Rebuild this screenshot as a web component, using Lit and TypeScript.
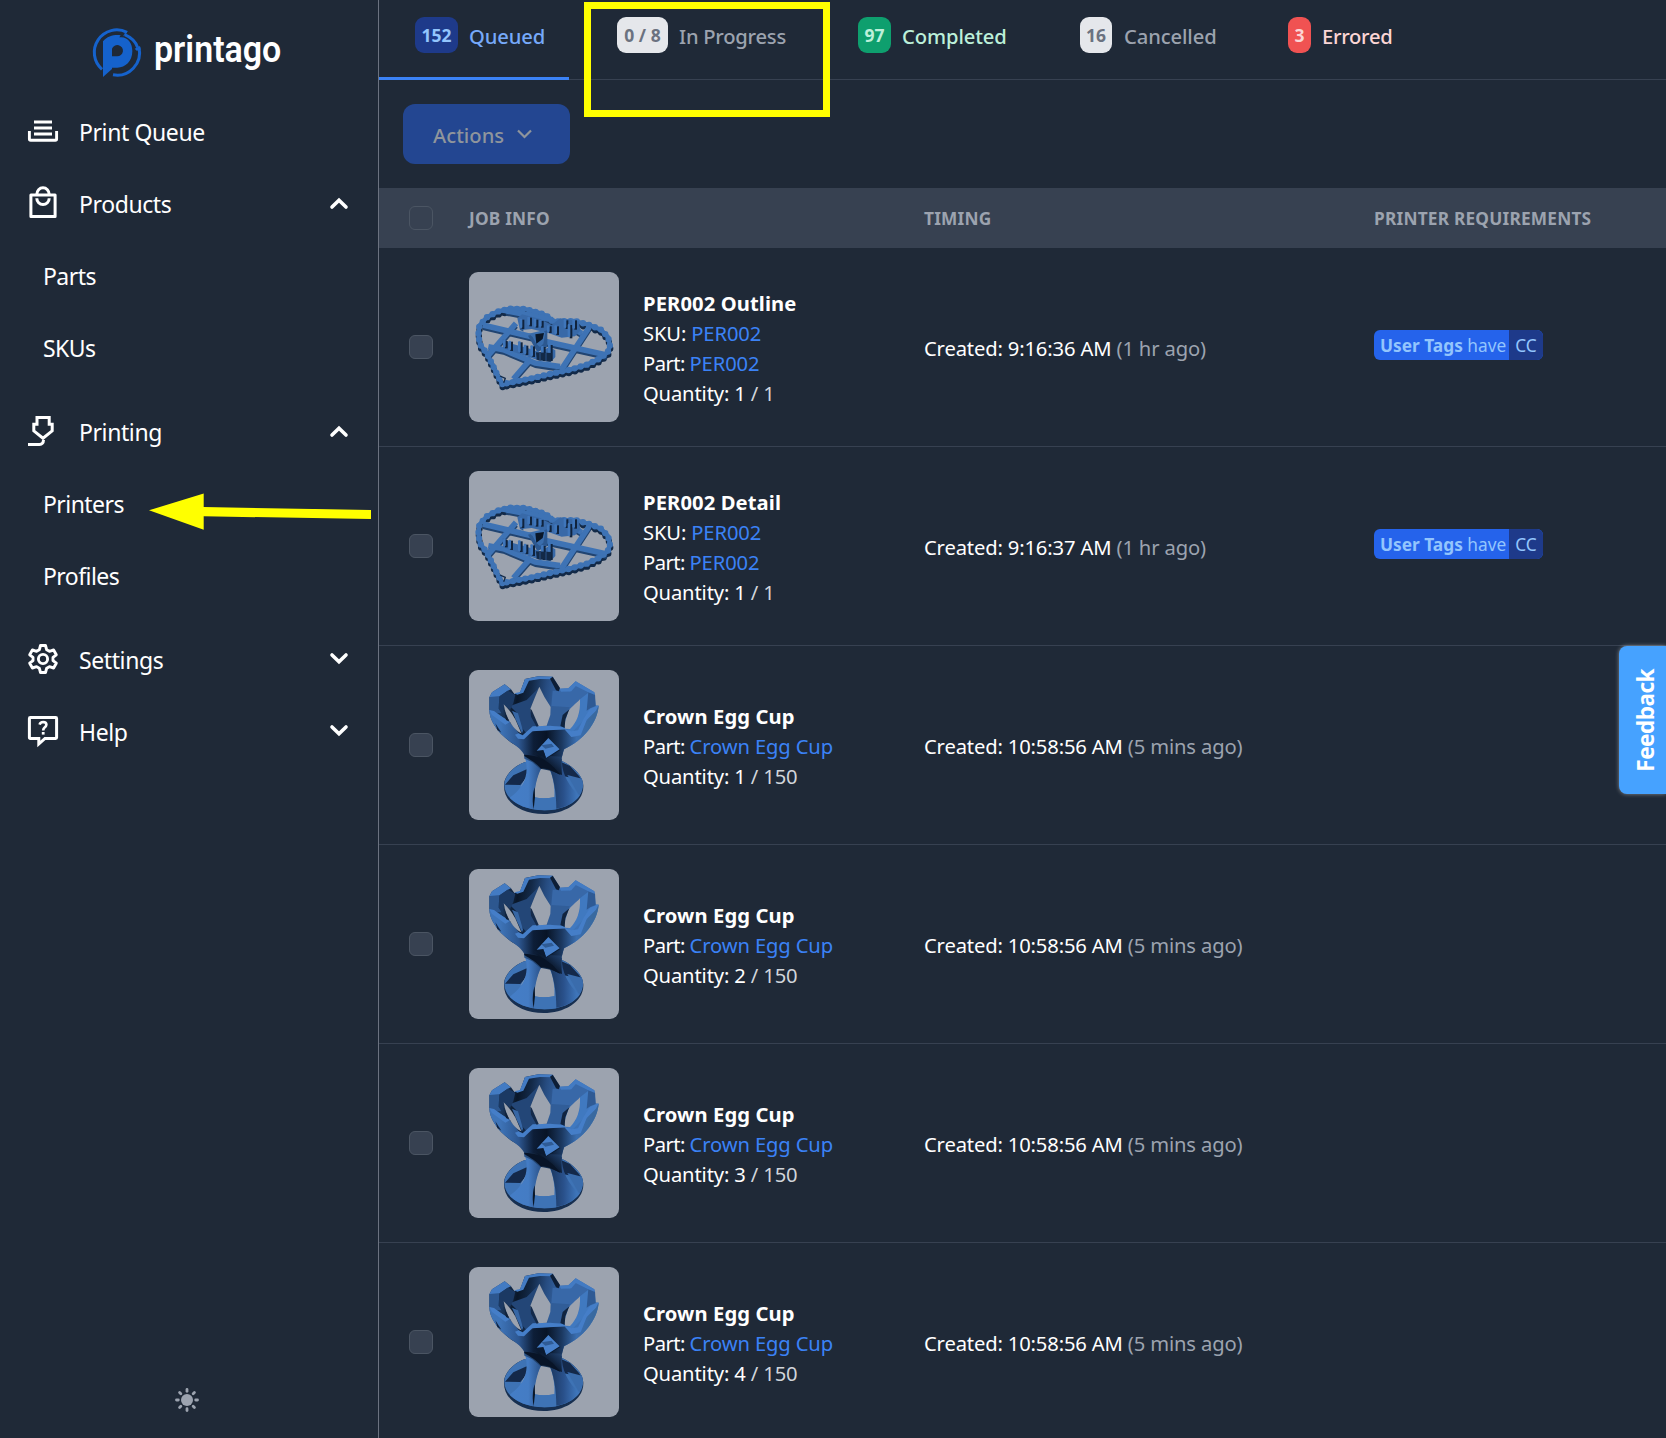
import { LitElement, html, svg, css, nothing, TemplateResult } from "lit";
import { customElement, property } from "lit/decorators.js";
import { classMap } from "lit/directives/class-map.js";

const chevronUp = html`<svg class="chev" width="20" height="14" viewBox="0 0 20 14"><path d="M3 11 10 4.2 17 11" fill="none" stroke="#fff" stroke-width="3.6" stroke-linecap="round"/></svg>`;
const chevronDown = html`<svg class="chev" width="20" height="14" viewBox="0 0 20 14"><path d="M3 3 10 9.8 17 3" fill="none" stroke="#fff" stroke-width="3.6" stroke-linecap="round"/></svg>`;

const icons: Record<string, TemplateResult> = {
  queue: svg`<path d="M6 2H24M6 8H24M6 14H24" stroke-width="3"/><path d="M1.4 11V19Q1.4 20.300 2.700 20.300H27.300Q28.600 20.300 28.600 19V11" stroke-width="2.9"/>`,
  bag: svg`<path d="M2.900 9.100H27.100V30.500H2.900Z" stroke-width="3" stroke-linejoin="round"/><path d="M8.800 8.500A6.200 6.700 0 0 1 21.200 8.500" stroke-width="3"/><path d="M8.800 12.200A6.200 6.400 0 0 0 21.200 12.200" stroke-width="3"/>`,
  nozzle: svg`<path d="M9 1.400H21.200V8.300H24.200V14.800L15 22.200 5.800 14.800V8.300H9Z" stroke-width="3"/><path d="M0 28.400H11.500Q15.300 28.400 15.500 24" stroke-width="3"/>`,
  gear: svg`<path d="M12.500 1.500H17.500L18.700 5.800 21.400 7.300 25.600 6 28.300 10.800 25 13.400V16.600L28.300 19.200 25.600 24 21.400 22.700 18.700 24.200 17.500 28.500H12.500L11.300 24.200 8.600 22.700 4.400 24 1.700 19.200 5 16.600V13.400L1.700 10.800 4.400 6 8.600 7.300 11.300 5.800Z" stroke-width="2.900" stroke-linejoin="round"/><circle cx="15" cy="15" r="4.600" stroke-width="2.900"/>`,
  help: svg`<path d="M2.300 1.500H27.700Q28.600 1.500 28.600 2.400V21.600Q28.600 22.500 27.700 22.500H17L10.800 28V22.500H2.300Q1.400 22.500 1.400 21.600V2.400Q1.400 1.500 2.300 1.500Z" stroke-width="3"/><path d="M11.600 8.600Q12.200 6 15.200 6 18.400 6.100 18.400 8.700 18.300 10.300 16.600 11.500 15.200 12.600 15.200 14.600" stroke-width="2.600"/><path d="M15.200 16V18.600" stroke-width="2.800"/>`,
};

@customElement("nav-item")
class NavItem extends LitElement {
  @property() icon = "";
  @property() label = "";
  @property() toggle = "";
  static styles = css`
    :host { display: block; }
    .row { display: flex; align-items: center; height: 72px; padding: 0 29px 0 28px; box-sizing: border-box; }
    .sub { padding-left: 43px; }
    .icon { display: flex; width: 30px; margin-right: 21px; padding-bottom: 2px; }
    .bag { padding-bottom: 4px; }
    .icon svg { overflow: visible; }
    .text { flex: 1; letter-spacing: -0.4px; line-height: 36px; }
    .sub .text { letter-spacing: -0.55px; }
    .chev { padding-bottom: 2px; }
  `;
  render() {
    const h = this.icon === "bag" ? 32 : this.icon === "queue" ? 22 : 30;
    return html`<div class=${classMap({ row: true, sub: !this.icon })}>
      ${this.icon
        ? html`<span class=${classMap({ icon: true, bag: this.icon === "bag" })}><svg width="30" height=${h} viewBox="0 0 30 ${h}" fill="none" stroke="#fff">${icons[this.icon]}</svg></span>`
        : nothing}
      <span class="text">${this.label}</span>
      ${this.toggle === "up" ? chevronUp : this.toggle === "down" ? chevronDown : nothing}
    </div>`;
  }
}

@customElement("heart-model")
class HeartModel extends LitElement {
  static styles = css`:host { display: block; } svg { display: block; }`;
  render() {
    const ring = "M127 357 112 330 98 300 80 265 60 238 55 210 58 182 80 157 112 140 150 131 195 132 240 144 262 154 279 170 300 169 345 168 388 180 423 194 444 216 450 240 443 262 416 282 378 300 330 314 270 327 210 341 165 350Z";
    const struts = "M68 180 215 215M250 228 440 270M85 245 130 254 225 294 300 305M168 175 82 274M388 186 304 314M214 280 160 342M137 137 278 164M340 190 365 205";
    const pegs: [number, number, number][] = [
      [186, 164, 28], [209, 158, 26], [228, 164, 24], [244, 168, 20], [268, 184, 20], [290, 184, 26], [318, 166, 26], [330, 180, 40], [344, 166, 28],
      [136, 228, 22], [152, 230, 28], [181, 232, 32], [198, 242, 28], [218, 244, 32], [236, 262, 24], [250, 246, 42], [271, 240, 48],
    ];
    return html`<svg width="150" height="150" viewBox="27 21 450 450" fill="none" stroke-linejoin="round">
      <g transform="translate(1 9)" stroke="#132a48"><path d=${ring} stroke-width="12"/><path d=${ring} stroke-width="19" stroke-linecap="round" stroke-dasharray="0 19"/><path d=${struts} stroke="#214471" stroke-width="12"/></g>
      <g stroke="#3e73b5"><path d=${ring} stroke-width="13"/><path d=${ring} stroke-width="19" stroke-linecap="round" stroke-dasharray="0 19"/><path d=${struts} stroke-width="17"/></g>
      <path d="M172 160 186 148 240 162 275 180 300 160 355 168 362 196 345 214 305 218 265 204 215 192 180 196ZM128 222 150 235 200 248 240 262 268 245 286 256 286 276 272 292 230 284 170 264 130 250Z" fill="#3869a8"/>
      <path d="M180 170 190 172 190 200 180 194ZM204 212 262 196 262 246 232 262Z" fill="#2c5890"/>
      ${pegs.map(([x, y, h]) => svg`<rect x=${x - 1} y=${y} width="8" height=${h} fill="#10233d"/><rect x=${x - 7} y=${y - 3} width="8" height=${h} rx="3" fill="#3f76bb"/>`)}
      <path d="M206 206 250 196 256 204 250 236 240 246 228 236 218 216Z" fill="#3a6dac"/>
      <path d="M226 208 252 204 248 222 229 236Z" fill="#0a1728"/>
      <path d="M228 262 276 264 272 290 230 284Z" fill="#132a48"/><path d="M240 262V286M258 264V288" stroke="#25497a" stroke-width="4"/>
      <path d="M120 333 136 340 131 353" stroke="#132a48" stroke-width="4"/>
    </svg>`;
  }
}

@customElement("cup-model")
class CupModel extends LitElement {
  static styles = css`:host { display: block; } svg { display: block; }`;
  render() {
    return html`<svg width="150" height="150" viewBox="27 30 450 450">
      <defs>
        <linearGradient id="inner" x1="115" y1="130" x2="330" y2="160" gradientUnits="userSpaceOnUse"><stop offset="0" stop-color="#21436f"/><stop offset=".25" stop-color="#0a1729"/><stop offset=".42" stop-color="#132947"/><stop offset=".62" stop-color="#264b7f"/><stop offset=".85" stop-color="#3869aa"/><stop offset="1" stop-color="#3d72b5"/></linearGradient>
        <linearGradient id="front" x1="120" y1="190" x2="400" y2="190" gradientUnits="userSpaceOnUse"><stop offset="0" stop-color="#3e74b8"/><stop offset=".2" stop-color="#2d5791"/><stop offset=".36" stop-color="#0d1e38"/><stop offset=".5" stop-color="#081426"/><stop offset=".66" stop-color="#1b3860"/><stop offset=".82" stop-color="#3a6eb0"/><stop offset="1" stop-color="#39699f"/></linearGradient>
        <linearGradient id="legL" x1="160" y1="0" x2="250" y2="0" gradientUnits="userSpaceOnUse"><stop offset="0" stop-color="#447dc6"/><stop offset=".5" stop-color="#447cc4"/><stop offset="1" stop-color="#264a7e"/></linearGradient>
        <linearGradient id="legR" x1="270" y1="0" x2="350" y2="0" gradientUnits="userSpaceOnUse"><stop offset="0" stop-color="#1b3860"/><stop offset=".5" stop-color="#29508a"/><stop offset="1" stop-color="#3e75ba"/></linearGradient>
        <linearGradient id="waist" x1="215" y1="330" x2="290" y2="250" gradientUnits="userSpaceOnUse"><stop offset="0" stop-color="#3a6dae"/><stop offset=".4" stop-color="#0a172a"/><stop offset=".6" stop-color="#152c4d"/><stop offset="1" stop-color="#2b5389"/></linearGradient>
      </defs>
      <path d="M132 378C130 350 160 318 195 306L306 303C340 318 371 350 370 378 371 430 310 462 251 462 185 462 132 430 132 378Z" fill="#172f50"/>
      <path d="M133 374C132 350 160 318 195 306L306 303C340 318 370 350 369 374 369 421 315 451 251 451 190 451 133 421 133 374Z" fill="#3e73b5"/>
      <path d="M135 374 160 346 200 328 206 345 181 375ZM303 306 330 318 357 348 363 358 306 348Z" fill="#14294a"/>
      <path d="M322 345 366 356 369 378 358 408Z" fill="#3a6cac"/>
      <path d="M181 382 203 343 203 360ZM305 348 324 376 309 366Z" fill="#9ca3af"/>
      <path d="M243 327H268C279 350 285 380 283 412Q252 418 223 412C223 380 229 350 243 327Z" fill="#9ca3af"/>
      <path d="M223 412Q252 418 284 411L289 448Q252 453 222 448Z" fill="#3e73b5"/>
      <path d="M193 285 245 322C230 350 219 400 222 447 192 443 165 430 149 413 195 380 210 340 193 285Z" fill="url(#legL)"/>
      <path d="M221 447C215 420 220 392 224 382L225 412Z" fill="#0a1728"/>
      <path d="M262 310 306 296C303 335 325 380 359 407 340 430 315 442 289 446 289 400 282 350 262 310Z" fill="url(#legR)"/>
      <path d="M190 262H316C305 280 303 300 306 345L272 332 240 326 216 306 193 296Z" fill="url(#waist)"/>
      <path d="M88 112 96 97 134 73 153 88 163 102 180 98 195 57 235 49 278 50 300 86 325 85 347 64 403 97 407 136 416 137C412 190 370 240 312 268L193 276C180 262 160 252 150 245 110 215 88 180 88 150Z" fill="url(#inner)"/>
      <path d="M200 120 238 82 212 144 214 165 228 200 200 220 172 190 170 158 150 138Z" fill="#234677"/>
      <path d="M278 92 330 96 350 76 385 96 380 140 362 118 322 157 306 200 268 198 274 138Z" fill="#3868a8"/>
      <path d="M274 138 330 142 310 168 300 198H262Z" fill="#315d98"/>
      <path d="M360 118 385 98 392 142 376 176 352 200 332 222 322 208 345 190 358 160Z" fill="#4079c0"/>
      <path d="M385 96 405 102 407 138 392 144 380 152Z" fill="#2f5a94"/>
      <path d="M163 100 180 96 195 57 235 49 278 50 282 58 240 57 207 62 190 98 172 104ZM88 112 96 97 134 73 153 88 143 92 118 110ZM325 85 347 64 403 97 405 105 385 97 347 78 334 94 303 95 298 86Z" fill="#437bc3"/>
      <path d="M278 50 300 84 296 94 288 91 270 56Z" fill="#0d1e36"/>
      <path d="M88 111 118 109 116 146 124 160 104 158 88 151Z" fill="#2d578f"/>
      <path d="M118 109 143 92 166 104 160 130 150 150 131 133 128 160 116 146Z" fill="#1b3963"/>
      <path d="M88 150 125 170 150 184 180 224 190 236 222 212 316 208 334 230 354 228 380 180 416 137C412 190 370 240 312 268L306 290 193 284C180 262 160 252 150 245 110 215 88 180 88 150Z" fill="url(#front)"/>
      <path d="M88 150 102 153 140 180 148 180 150 186 136 194 96 165ZM165 224 176 220 188 226 218 199 270 197 316 202 318 208 217 214 192 238 174 236ZM312 206 334 214 354 211 370 178 390 146 416 136 408 152 380 180 362 226 334 231Z" fill="#457ec8"/>
      <path d="M131 133C148 148 160 168 166 178L184 220C165 212 138 180 131 133Z" fill="#9ca3af"/>
      <path d="M156 152 174 160 189 212 186 220 166 176Z" fill="#3767a5"/>
      <path d="M131 133C133 160 142 178 158 198L150 186 138 180Z" fill="#0e2039"/>
      <path d="M238 80Q252 112 272 141L271 165 260 197 232 199 214 165 211 146Q226 108 238 80Z" fill="#9ca3af"/>
      <path d="M211 146 215 150 236 198 230 200 213 170Z" fill="#142a4a"/>
      <path d="M360 118C362 160 350 188 330 207L316 206 312 195 324 157C330 142 348 132 360 118Z" fill="#9ca3af"/>
      <path d="M301 198 308 165 328 148 316 178 314 204Z" fill="#11243f"/>
      <path d="M193 284C240 285 270 305 302 345 280 334 262 322 243 326 228 308 212 300 193 288Z" fill="#081427"/>
      <path d="M106 190 124 218 112 210Z" fill="#10233f"/>
      <path d="M265 234 301 270 258 296 224 273Z" fill="#0b1a30"/>
      <path d="M265 234 299 268 258 294 250 270 230 272Z" fill="#4780ca"/>
      <path d="M244 256 275 251 282 260 256 266Z" fill="#2f5b95"/><path d="M250 270 258 294 252 290Z" fill="#0b1a30"/>
    </svg>`;
  }
}

interface Job { title: string; sku?: string; part: string; n: number; of: number; time: string; ago: string; tag?: string; model: "heart" | "cup"; }
const jobs: Job[] = [
  { title: "PER002 Outline", sku: "PER002", part: "PER002", n: 1, of: 1, time: "9:16:36 AM", ago: "1 hr ago", tag: "CC", model: "heart" },
  { title: "PER002 Detail", sku: "PER002", part: "PER002", n: 1, of: 1, time: "9:16:37 AM", ago: "1 hr ago", tag: "CC", model: "heart" },
  ...[1, 2, 3, 4].map((n): Job => ({ title: "Crown Egg Cup", part: "Crown Egg Cup", n, of: 150, time: "10:58:56 AM", ago: "5 mins ago", model: "cup" })),
];

const tabs = [
  { key: "queued", count: "152", label: "Queued" },
  { key: "progress", count: "0 / 8", label: "In Progress" },
  { key: "completed", count: "97", label: "Completed" },
  { key: "cancelled", count: "16", label: "Cancelled" },
  { key: "errored", count: "3", label: "Errored" },
];

@customElement("app-root")
class AppRoot extends LitElement {
  static styles = css`
    :host { display: block; position: relative; width: 1666px; height: 1438px; overflow: hidden; background: #1f2937; color: #fff; font-family: "Noto Sans", "Open Sans", sans-serif; font-size: 20.2px; line-height: 30px; }
    .app { display: flex; height: 100%; }
    .side { display: flex; flex-direction: column; width: 378px; flex: none; border-right: 1px solid #6b7280; font-size: 23px; }
    .brand { display: block; height: 96px; }
    .group { padding-bottom: 12px; }
    .theme { margin-top: auto; display: flex; justify-content: center; padding: 0 4px 26px 0; }
    .main { flex: 1; min-width: 0; display: flex; flex-direction: column; }
    .tabs { display: flex; gap: 12px; height: 80px; box-sizing: border-box; box-shadow: inset 0 -1px #374151; flex: none; }
    .tab { display: flex; flex: none; box-sizing: border-box; height: 80px; padding: 17px 0 0 36px; font-weight: 500; color: #9ca3af; white-space: nowrap; }
    .badge { flex: none; box-sizing: border-box; height: 36px; border-radius: 9px; text-align: center; font-size: 17.5px; font-weight: 700; line-height: 36px; background: #e5e7eb; color: #6b7280; }
    .label { margin-left: 11px; line-height: 36px; padding-top: 1px; letter-spacing: -.1px; }
    .queued { width: 190px; border-bottom: 3px solid #3b82f6; color: #76a9fa; }
    .queued .badge { width: 43px; background: #1e3a8a; color: #93c5fd; }
    .progress { width: 229px; }
    .progress .badge { width: 51px; }
    .progress .label { letter-spacing: -0.25px; }
    .completed { width: 210px; color: #bcf0da; }
    .completed .badge { width: 33px; background: #0e9f6e; color: #bcf0da; }
    .cancelled { width: 196px; }
    .cancelled .badge { width: 32px; }
    .cancelled .label { margin-left: 12px; }
    .errored { color: #fbd5d5; }
    .errored .badge { width: 23px; background: #f05252; color: #fbd5d5; }
    .errored .label { letter-spacing: -.3px; }
    .toolbar { display: flex; padding: 24px; flex: none; }
    .actions { display: flex; align-items: center; gap: 13px; box-sizing: border-box; width: 167px; height: 60px; padding: 2px 0 0 30px; border: 0; border-radius: 12px; background: #234691; color: #8f959c; font: inherit; font-weight: 500; }
    .actions svg { margin-bottom: 2px; }
    .row { display: grid; grid-template-columns: 90px 455px 450px 1fr; align-items: center; flex: none; box-sizing: border-box; }
    .head { height: 60px; background: #374151; color: #9ca3af; font-size: 17.3px; font-weight: 700; letter-spacing: .2px; }
    .col { padding-top: 2px; }
    .job { height: 199px; border-bottom: 1px solid #374151; }
    .check { box-sizing: border-box; width: 24px; height: 24px; margin-left: 30px; border: 1px solid #4b5563; border-radius: 6px; background: #374151; }
    .info { display: flex; align-items: center; gap: 24px; }
    .thumb { width: 150px; height: 150px; border-radius: 9px; background: #9ca3af; overflow: hidden; }
    .lines { display: flex; flex-direction: column; padding-top: 2px; letter-spacing: -.15px; }
    .title { font-weight: 700; letter-spacing: .1px; }
    .part { letter-spacing: -.55px; }
    .link { color: #3b82f6; letter-spacing: -.12px; }
    .total { color: #d1d5db; }
    .time { letter-spacing: -.15px; padding-top: 2px; }
    .ago { color: #9ca3af; }
    .pill { display: inline-flex; height: 30px; margin-top: -10px; border-radius: 6px; overflow: hidden; font-size: 17.3px; line-height: 31px; color: #93c5fd; background: #2563eb; vertical-align: middle; }
    .rule { width: 135px; box-sizing: border-box; padding-left: 6px; white-space: nowrap; }
    .value { width: 34px; text-align: center; background: #1e3a8a; }
    .feedback { position: absolute; right: 0; top: 646px; width: 47px; height: 148px; border-radius: 8px 0 0 8px; background: #46a2ff; box-shadow: 0 0 4px rgba(255,255,255,.45); display: flex; align-items: center; justify-content: center; font-weight: 700; font-size: 22.5px; letter-spacing: -.5px; }
    .feedback span { writing-mode: vertical-rl; transform: rotate(180deg); margin: 1px 0 0 6px; }
    .frame { position: absolute; left: 584px; top: 2px; width: 246px; height: 115px; box-sizing: border-box; border: 7px solid #ff0; }
    .arrow { position: absolute; left: 148px; top: 492px; }
  `;

  private job(j: Job) {
    return html`<div class="row job">
      <span class="check"></span>
      <div class="info">
        <div class="thumb">${j.model === "heart" ? html`<heart-model></heart-model>` : html`<cup-model></cup-model>`}</div>
        <div class="lines">
          <span class="title">${j.title}</span>
          ${j.sku ? html`<span>SKU: <span class="link">${j.sku}</span></span>` : nothing}
          <span class="part">Part: <span class="link">${j.part}</span></span>
          <span>Quantity: ${j.n} <span class="total">/ ${j.of}</span></span>
        </div>
      </div>
      <span class="time">Created: ${j.time} <span class="ago">(${j.ago})</span></span>
      <div>${j.tag ? html`<span class="pill"><span class="rule"><b>User Tags</b> have</span><span class="value">${j.tag}</span></span>` : nothing}</div>
    </div>`;
  }

  render() {
    return html`
      <div class="app">
        <nav class="side">
          <svg class="brand" width="378" height="96" viewBox="0 0 1134 288">
            <g fill="none" stroke="#1562cc" stroke-width="9">
              <path d="M381 97A67.5 67.5 0 0 0 306 208"/>
              <path d="M374 104Q405 117 413 143"/>
              <path d="M417 143A67.5 67.5 0 0 1 339 224.500"/>
            </g>
            <path d="M376 97 384 94 368 110ZM404 146 420 138 422 150 410 152Z" fill="#1562cc"/>
            <path fill="#1562cc" fill-rule="evenodd" d="M309 231V124C322 108 345 103 362 106L358 112C383 108 397 129 397 153 397 184 376 203 352 203H336V207ZM336 169H351A17 17 0 1 0 336 146Z"/>
            <text x="462" y="186" fill="#fff" font-family="Roboto, sans-serif" font-weight="600" font-size="109" textLength="382" lengthAdjust="spacingAndGlyphs">printago</text>
          </svg>
          <nav-item icon="queue" label="Print Queue"></nav-item>
          <div class="group">
            <nav-item icon="bag" label="Products" toggle="up"></nav-item>
            <nav-item label="Parts"></nav-item>
            <nav-item label="SKUs"></nav-item>
          </div>
          <div class="group">
            <nav-item icon="nozzle" label="Printing" toggle="up"></nav-item>
            <nav-item label="Printers"></nav-item>
            <nav-item label="Profiles"></nav-item>
          </div>
          <nav-item icon="gear" label="Settings" toggle="down"></nav-item>
          <nav-item icon="help" label="Help" toggle="down"></nav-item>
          <div class="theme"><svg width="24" height="24" viewBox="-12 -12 24 24"><circle r="6" fill="#9ca3af"/>${[0, 45, 90, 135, 180, 225, 270, 315].map((a) => svg`<path d="M0-8.700V-10.500" transform="rotate(${a})" stroke="#9ca3af" stroke-width="2.800" stroke-linecap="round"/>`)}</svg></div>
        </nav>
        <main class="main">
          <div class="tabs">
            ${tabs.map((t) => html`<div class="tab ${t.key}"><span class="badge">${t.count}</span><span class="label">${t.label}</span></div>`)}
          </div>
          <div class="toolbar">
            <button class="actions">Actions<svg width="15" height="10" viewBox="0 0 15 10"><path d="M1 1.500 7.500 8 14 1.500" fill="none" stroke="#8f959c" stroke-width="2.200"/></svg></button>
          </div>
          <div class="row head"><span class="check"></span><span class="col">JOB INFO</span><span class="col">TIMING</span><span class="col">PRINTER REQUIREMENTS</span></div>
          ${jobs.map((j) => this.job(j))}
        </main>
      </div>
      <div class="feedback"><span>Feedback</span></div>
      <div class="frame"></div>
      <svg class="arrow" width="224" height="40" viewBox="148 492 224 40"><path d="M149 510.300 203.700 493.500V507L371 510V519L203.700 516.300V529.700Z" fill="#ff0"/></svg>
    `;
  }
}
